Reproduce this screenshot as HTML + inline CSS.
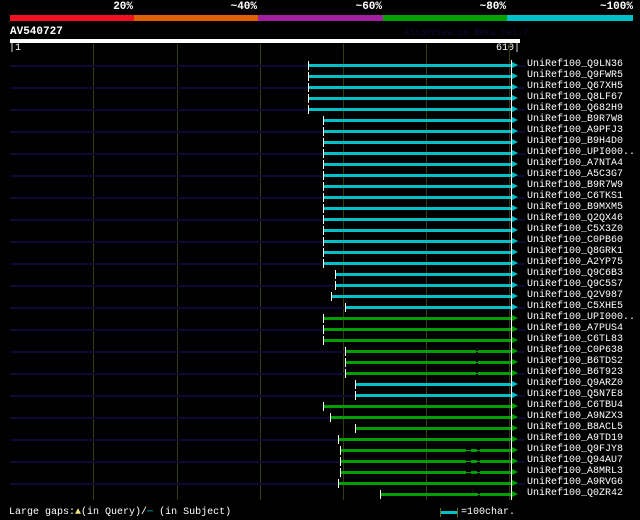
<!DOCTYPE html>
<html><head><meta charset="utf-8"><style>
body{margin:0;background:#000;width:640px;height:520px;overflow:hidden;position:relative;font-family:"Liberation Mono",monospace;color:#fff}
.a{position:absolute}
.g{position:absolute;top:44px;height:456px;width:1px;background:#3a3a10}
.r{position:absolute;left:0;width:640px;height:11px}
.n{position:absolute;left:10px;width:515px;top:5px;height:2px;background:#0b0b35}
.b{position:absolute;top:4px;height:3px;left:calc(var(--x)*1px);width:calc((511px - var(--x)*1px))}
.c .b{background:#00c0c8}.v .b{background:#00a000}
.t{position:absolute;top:1px;height:9px;width:1px;background:#fff;left:calc(var(--x)*1px)}
.w{position:absolute;left:511px;top:0;width:1px;height:11px;background:#fff}
.p{position:absolute;left:512px;top:2px;width:0;height:0;border-top:3.5px solid transparent;border-bottom:3.5px solid transparent;border-left:6px solid}
.c .p{border-left-color:#00c0c8}.v .p{border-left-color:#00a000}
.l{position:absolute;left:527px;top:-1px;font-size:10px;line-height:12px;white-space:pre}
.gp{position:absolute;top:4px;height:3px;background:#000}
.gp i{position:absolute;left:0;right:0;top:1px;height:1px;background:#00a000}
</style></head><body>
<div class="a" style="left:10px;top:0;font-size:11px;font-weight:bold;line-height:14px;width:623px">
<span class="a" style="right:500px">20%</span><span class="a" style="right:376px">~40%</span><span class="a" style="right:251px">~60%</span><span class="a" style="right:127px">~80%</span><span class="a" style="right:0">~100%</span></div>
<div class="a" style="top:15px;left:10px;width:124px;height:6px;background:#f01020"></div>
<div class="a" style="top:15px;left:134px;width:124px;height:6px;background:#e06000"></div>
<div class="a" style="top:15px;left:258px;width:125px;height:6px;background:#a020a0"></div>
<div class="a" style="top:15px;left:383px;width:124px;height:6px;background:#00a000"></div>
<div class="a" style="top:15px;left:507px;width:126px;height:6px;background:#00c0c8"></div>
<div class="a" style="left:10px;top:25px;font-size:11px;font-weight:bold;line-height:14px">AV540727</div>
<div class="a" style="left:404px;top:27px;font-size:9px;line-height:12px;color:#0a0a38">AlignView.pm Beta rel.7</div>
<div class="a" style="top:39px;left:10px;width:510px;height:4px;background:#fff"></div>
<div class="a" style="left:9px;top:43px;font-size:10px;line-height:12px">|1</div>
<div class="a" style="left:496px;top:43px;font-size:10px;line-height:12px">610|</div>
<div class="g" style="left:93px"></div><div class="g" style="left:177px"></div><div class="g" style="left:260px"></div><div class="g" style="left:343px"></div><div class="g" style="left:426px"></div><div class="g" style="left:509px"></div>

<div class="r c" style="top:60px;--x:308"><div class="n"></div><div class="b"></div><div class="t"></div><div class="w"></div><div class="p"></div><div class="l">UniRef100_Q9LN36</div></div>
<div class="r c" style="top:71px;--x:308"><div class="b"></div><div class="t"></div><div class="w"></div><div class="p"></div><div class="l">UniRef100_Q9FWR5</div></div>
<div class="r c" style="top:82px;--x:308"><div class="n"></div><div class="b"></div><div class="t"></div><div class="w"></div><div class="p"></div><div class="l">UniRef100_Q67XH5</div></div>
<div class="r c" style="top:93px;--x:308"><div class="b"></div><div class="t"></div><div class="w"></div><div class="p"></div><div class="l">UniRef100_Q8LF67</div></div>
<div class="r c" style="top:104px;--x:308"><div class="n"></div><div class="b"></div><div class="t"></div><div class="w"></div><div class="p"></div><div class="l">UniRef100_Q682H9</div></div>
<div class="r c" style="top:115px;--x:323"><div class="b"></div><div class="t"></div><div class="w"></div><div class="p"></div><div class="l">UniRef100_B9R7W8</div></div>
<div class="r c" style="top:126px;--x:323"><div class="n"></div><div class="b"></div><div class="t"></div><div class="w"></div><div class="p"></div><div class="l">UniRef100_A9PFJ3</div></div>
<div class="r c" style="top:137px;--x:323"><div class="b"></div><div class="t"></div><div class="w"></div><div class="p"></div><div class="l">UniRef100_B9H4D0</div></div>
<div class="r c" style="top:148px;--x:323"><div class="n"></div><div class="b"></div><div class="t"></div><div class="w"></div><div class="p"></div><div class="l">UniRef100_UPI000..</div></div>
<div class="r c" style="top:159px;--x:323"><div class="b"></div><div class="t"></div><div class="w"></div><div class="p"></div><div class="l">UniRef100_A7NTA4</div></div>
<div class="r c" style="top:170px;--x:323"><div class="n"></div><div class="b"></div><div class="t"></div><div class="w"></div><div class="p"></div><div class="l">UniRef100_A5C3G7</div></div>
<div class="r c" style="top:181px;--x:323"><div class="b"></div><div class="t"></div><div class="w"></div><div class="p"></div><div class="l">UniRef100_B9R7W9</div></div>
<div class="r c" style="top:192px;--x:323"><div class="n"></div><div class="b"></div><div class="t"></div><div class="w"></div><div class="p"></div><div class="l">UniRef100_C6TKS1</div></div>
<div class="r c" style="top:203px;--x:323"><div class="b"></div><div class="t"></div><div class="w"></div><div class="p"></div><div class="l">UniRef100_B9MXM5</div></div>
<div class="r c" style="top:214px;--x:323"><div class="n"></div><div class="b"></div><div class="t"></div><div class="w"></div><div class="p"></div><div class="l">UniRef100_Q2QX46</div></div>
<div class="r c" style="top:225px;--x:323"><div class="b"></div><div class="t"></div><div class="w"></div><div class="p"></div><div class="l">UniRef100_C5X3Z0</div></div>
<div class="r c" style="top:236px;--x:323"><div class="n"></div><div class="b"></div><div class="t"></div><div class="w"></div><div class="p"></div><div class="l">UniRef100_C0PB60</div></div>
<div class="r c" style="top:247px;--x:323"><div class="b"></div><div class="t"></div><div class="w"></div><div class="p"></div><div class="l">UniRef100_Q8GRK1</div></div>
<div class="r c" style="top:258px;--x:323"><div class="n"></div><div class="b"></div><div class="t"></div><div class="w"></div><div class="p"></div><div class="l">UniRef100_A2YP75</div></div>
<div class="r c" style="top:269px;--x:335"><div class="b"></div><div class="t"></div><div class="w"></div><div class="p"></div><div class="l">UniRef100_Q9C6B3</div></div>
<div class="r c" style="top:280px;--x:335"><div class="n"></div><div class="b"></div><div class="t"></div><div class="w"></div><div class="p"></div><div class="l">UniRef100_Q9C5S7</div></div>
<div class="r c" style="top:291px;--x:331"><div class="b"></div><div class="t"></div><div class="w"></div><div class="p"></div><div class="l">UniRef100_Q2V987</div></div>
<div class="r c" style="top:302px;--x:345"><div class="n"></div><div class="b"></div><div class="t"></div><div class="w"></div><div class="p"></div><div class="l">UniRef100_C5XHE5</div></div>
<div class="r v" style="top:313px;--x:323"><div class="b"></div><div class="t"></div><div class="w"></div><div class="p"></div><div class="l">UniRef100_UPI000..</div></div>
<div class="r v" style="top:324px;--x:323"><div class="n"></div><div class="b"></div><div class="t"></div><div class="w"></div><div class="p"></div><div class="l">UniRef100_A7PUS4</div></div>
<div class="r v" style="top:335px;--x:323"><div class="b"></div><div class="t"></div><div class="w"></div><div class="p"></div><div class="l">UniRef100_C6TL83</div></div>
<div class="r v" style="top:346px;--x:345"><div class="n"></div><div class="b"></div><div class="gp" style="left:476px;width:2px"><i></i></div><div class="t"></div><div class="w"></div><div class="p"></div><div class="l">UniRef100_C0P638</div></div>
<div class="r v" style="top:357px;--x:345"><div class="b"></div><div class="gp" style="left:476px;width:2px"><i></i></div><div class="t"></div><div class="w"></div><div class="p"></div><div class="l">UniRef100_B6TDS2</div></div>
<div class="r v" style="top:368px;--x:345"><div class="n"></div><div class="b"></div><div class="gp" style="left:476px;width:2px"><i></i></div><div class="t"></div><div class="w"></div><div class="p"></div><div class="l">UniRef100_B6T923</div></div>
<div class="r c" style="top:379px;--x:355"><div class="b"></div><div class="t"></div><div class="w"></div><div class="p"></div><div class="l">UniRef100_Q9ARZ0</div></div>
<div class="r c" style="top:390px;--x:355"><div class="n"></div><div class="b"></div><div class="t"></div><div class="w"></div><div class="p"></div><div class="l">UniRef100_Q5N7E8</div></div>
<div class="r v" style="top:401px;--x:323"><div class="b"></div><div class="t"></div><div class="w"></div><div class="p"></div><div class="l">UniRef100_C6TBU4</div></div>
<div class="r v" style="top:412px;--x:330"><div class="n"></div><div class="b"></div><div class="t"></div><div class="w"></div><div class="p"></div><div class="l">UniRef100_A9NZX3</div></div>
<div class="r v" style="top:423px;--x:355"><div class="b"></div><div class="t"></div><div class="w"></div><div class="p"></div><div class="l">UniRef100_B8ACL5</div></div>
<div class="r v" style="top:434px;--x:338"><div class="n"></div><div class="b"></div><div class="t"></div><div class="w"></div><div class="p"></div><div class="l">UniRef100_A9TD19</div></div>
<div class="r v" style="top:445px;--x:340"><div class="b"></div><div class="gp" style="left:466px;width:5px"><i></i></div><div class="gp" style="left:477px;width:3px"><i></i></div><div class="t"></div><div class="w"></div><div class="p"></div><div class="l">UniRef100_Q9FJY8</div></div>
<div class="r v" style="top:456px;--x:340"><div class="n"></div><div class="b"></div><div class="gp" style="left:466px;width:5px"><i></i></div><div class="gp" style="left:477px;width:3px"><i></i></div><div class="t"></div><div class="w"></div><div class="p"></div><div class="l">UniRef100_Q94AU7</div></div>
<div class="r v" style="top:467px;--x:340"><div class="b"></div><div class="gp" style="left:466px;width:5px"><i></i></div><div class="gp" style="left:477px;width:3px"><i></i></div><div class="t"></div><div class="w"></div><div class="p"></div><div class="l">UniRef100_A8MRL3</div></div>
<div class="r v" style="top:478px;--x:338"><div class="n"></div><div class="b"></div><div class="t"></div><div class="w"></div><div class="p"></div><div class="l">UniRef100_A9RVG6</div></div>
<div class="r v" style="top:489px;--x:380"><div class="b"></div><div class="gp" style="left:478px;width:2px"><i></i></div><div class="t"></div><div class="w"></div><div class="p"></div><div class="l">UniRef100_Q0ZR42</div></div>

<div class="a" style="left:9px;top:506px;font-size:10px;line-height:13px;white-space:pre">Large gaps:<span style="color:#f0e080">▲</span>(in Query)/<span style="color:#00c0c8">─</span> (in Subject)</div>
<div class="a" style="left:440px;top:508px;width:1px;height:9px;background:#6a6a20"></div>
<div class="a" style="left:457px;top:508px;width:1px;height:9px;background:#6a6a20"></div>
<div class="a" style="left:441px;top:511px;width:16px;height:3px;background:#00c0c8"></div>
<div class="a" style="left:461px;top:506px;font-size:10px;line-height:13px">=100char.</div>
</body></html>
